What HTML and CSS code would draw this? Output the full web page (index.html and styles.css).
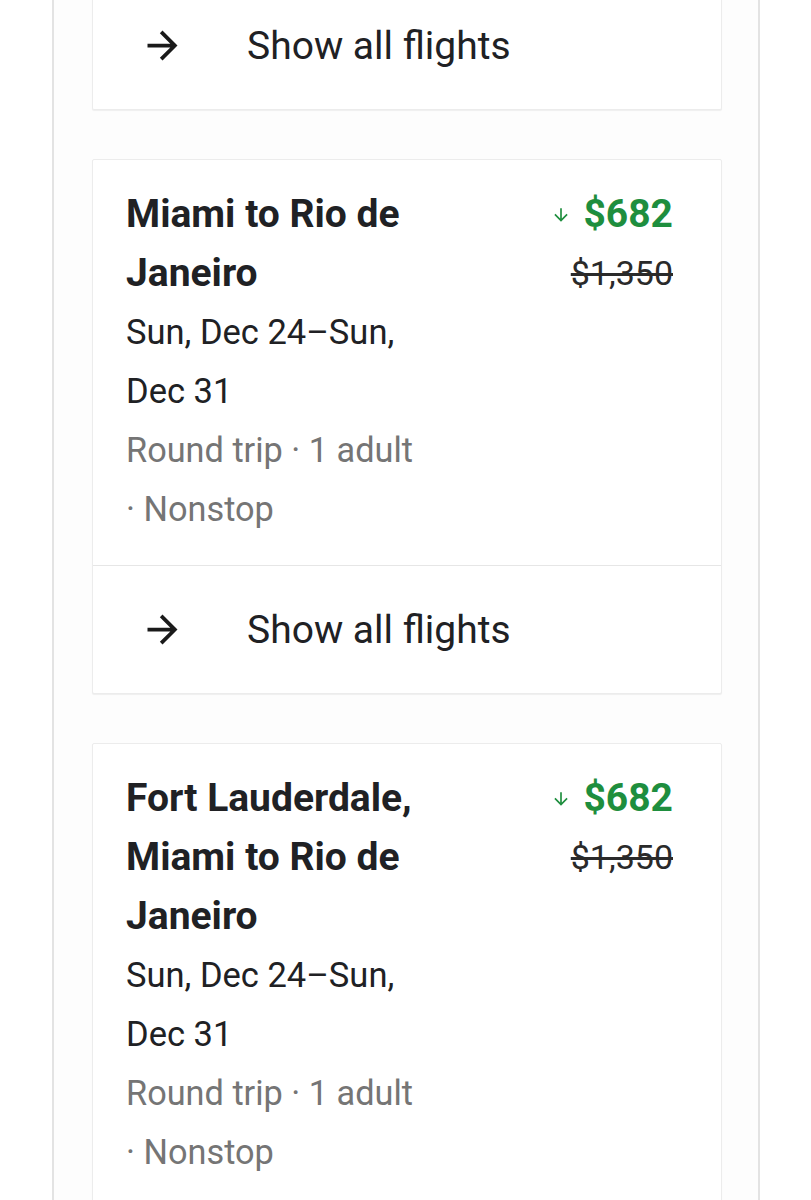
FILE: index.html
```html
<!DOCTYPE html>
<html>
<head>
<meta charset="utf-8">
<link rel="stylesheet" href="styles.css">
</head>
<body>
<div class="wrap">
  <div class="card card-first">
    <div class="row-link">
      <svg class="arrow" viewBox="0 0 24 24" width="45" height="45"><path d="M12 4l-1.41 1.41L16.17 11H4v2h12.17l-5.58 5.59L12 20l8-8z"/></svg>
      <span class="link-text">Show all flights</span>
    </div>
  </div>

  <div class="card">
    <div class="info">
      <div class="left">
        <div class="title">Miami to Rio de Janeiro</div>
        <div class="dates">Sun, Dec 24–Sun, Dec 31</div>
        <div class="meta">Round trip · 1 adult · Nonstop</div>
      </div>
      <div class="right">
        <div class="price"><svg class="down" viewBox="0 0 24 24" width="20" height="20"><path d="M20 12l-1.41-1.41L13 16.17V4h-2v12.17l-5.58-5.59L4 12l8 8 8-8z"/></svg>$682</div>
        <div class="old">$1,350</div>
      </div>
    </div>
    <div class="row-link divider">
      <svg class="arrow" viewBox="0 0 24 24" width="45" height="45"><path d="M12 4l-1.41 1.41L16.17 11H4v2h12.17l-5.58 5.59L12 20l8-8z"/></svg>
      <span class="link-text">Show all flights</span>
    </div>
  </div>

  <div class="card">
    <div class="info">
      <div class="left">
        <div class="title">Fort Lauderdale, Miami to Rio de Janeiro</div>
        <div class="dates">Sun, Dec 24–Sun, Dec 31</div>
        <div class="meta">Round trip · 1 adult · Nonstop</div>
      </div>
      <div class="right">
        <div class="price"><svg class="down" viewBox="0 0 24 24" width="20" height="20"><path d="M20 12l-1.41-1.41L13 16.17V4h-2v12.17l-5.58-5.59L4 12l8 8 8-8z"/></svg>$682</div>
        <div class="old">$1,350</div>
      </div>
    </div>
    <div class="row-link divider">
      <svg class="arrow" viewBox="0 0 24 24" width="45" height="45"><path d="M12 4l-1.41 1.41L16.17 11H4v2h12.17l-5.58 5.59L12 20l8-8z"/></svg>
      <span class="link-text">Show all flights</span>
    </div>
  </div>
</div>
</body>
</html>
```

FILE: styles.css
```css
html, body {
  margin: 0;
  padding: 0;
  background: #ffffff;
}
body {
  font-family: Roboto, "Liberation Sans", sans-serif;
  color: #202124;
  height: 1200px;
  overflow: hidden;
}
.wrap {
  margin-left: 52px;
  width: 708px;
  min-height: 1400px;
  border-left: 2px solid #e3e3e3;
  border-right: 2px solid #e3e3e3;
  background: #fdfdfd;
  padding: 0 36px 0 38px;
  box-sizing: border-box;
}
.card {
  background: #ffffff;
  border: 1px solid #ececec;
  box-shadow: 0 1px 1px rgba(0,0,0,0.06);
  border-radius: 2px;
  margin-bottom: 49px;
}
.card-first {
  margin-top: -18px;
  border-top: none;
}
.row-link {
  height: 127px;
  display: flex;
  align-items: center;
  padding-left: 47px;
}
.divider {
  border-top: 1px solid #e6e6e6;
}
.arrow {
  fill: #1a1a1a;
  flex: none;
}
.link-text {
  font-size: 39px;
  margin-left: 62px;
  color: #202124;
}
.info {
  display: flex;
  justify-content: space-between;
  padding: 25px 48px 26px 33px;
  line-height: 59px;
}
.left {
  width: 296px;
}
.title {
  font-size: 39px;
  font-weight: 700;
  color: #202124;
}
.dates {
  font-size: 34.5px;
  color: #202124;
}
.meta {
  font-size: 34.3px;
  color: #757575;
}
.right {
  text-align: right;
}
.price {
  font-size: 39px;
  font-weight: 700;
  color: #1e8e3e;
  display: flex;
  align-items: center;
  justify-content: flex-end;
}
.down {
  fill: #1e8e3e;
  margin-right: 12px;
}
.old {
  font-size: 34px;
  color: #2a2a2a;
  text-decoration: line-through;
}
```
